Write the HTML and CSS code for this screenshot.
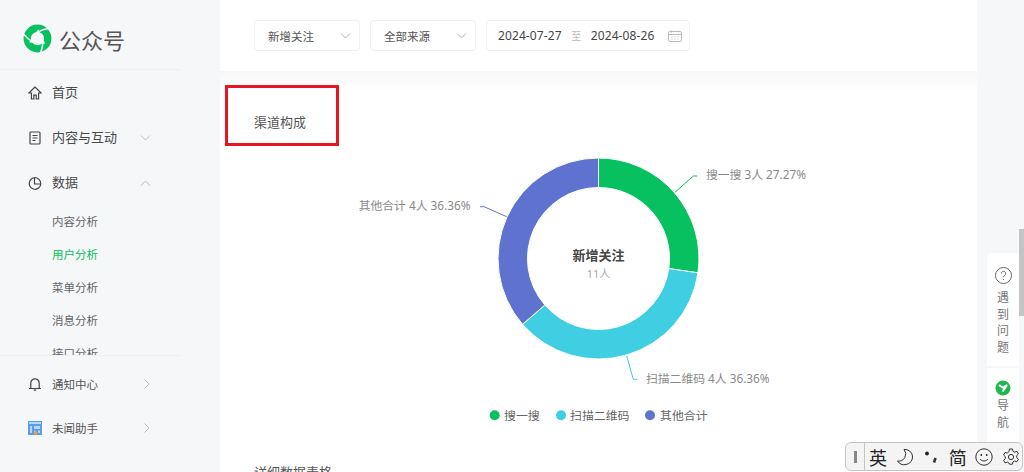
FILE: index.html
```html
<!DOCTYPE html>
<html lang="zh">
<head>
    <meta charset="UTF-8">
    <title>公众号 - 用户分析</title>
    <link rel="stylesheet" href="styles.css">
</head>
<body>
    <aside class="sidebar">
        <div class="brand">
            <svg class="brand-logo" viewBox="-15 -15 30 30">
                <circle r="10.600" fill="none" stroke="#07c160" stroke-width="7.600"/>
                <g id="cut">
                    <path d="M12.500-10.500C8-9.500 3-9 .5-6" fill="none" stroke="#f6f7f9" stroke-width="1.600"/>
                    <path d="M-2.500-5.500 1-9.500 2.500-5Z" fill="#f6f7f9"/>
                </g>
                <use href="#cut" transform="rotate(120)"/>
                <use href="#cut" transform="rotate(240)"/>
            </svg>
            <span>公众号</span>
        </div>
        <nav class="nav">
            <div class="nav-item">
                <svg class="nav-icon" viewBox="0 0 14 14"><path d="M7 1 .8 7h2.600v6h2.400V9.200h2.400V13h2.400V7h2.600Z"/></svg>
                <span>首页</span>
            </div>
            <div class="nav-item">
                <svg class="nav-icon" viewBox="0 0 14 14"><rect x="2" y="1" width="10" height="12" rx="1"/><path d="M4.500 4.500h5M4.500 7h5M4.500 9.500h3"/></svg>
                <span>内容与互动</span>
                <svg class="chevron" viewBox="0 0 10 6"><path d="M.5.5 5 5 9.500.5"/></svg>
            </div>
            <div class="nav-item">
                <svg class="nav-icon" viewBox="0 0 14 14"><path d="M6.500 1.700A5.800 5.800 0 1 0 12.800 8H6.500V1.500A6.300 6.300 0 0 1 12.800 8"/></svg>
                <span>数据</span>
                <svg class="chevron" viewBox="0 0 10 6"><path d="M.5 5.500 5 1 9.500 5.500"/></svg>
            </div>
            <div class="sub-item">内容分析</div>
            <div class="sub-item active">用户分析</div>
            <div class="sub-item">菜单分析</div>
            <div class="sub-item">消息分析</div>
            <div class="sub-item">接口分析</div>
        </nav>
        <div class="sidebar-foot">
            <div class="nav-item foot-item">
                <svg class="nav-icon" viewBox="0 0 14 14"><path d="M1 11.500h12M2.800 11.500V6a4.200 4.200 0 0 1 8.400 0v5.500M5.800 13.200h2.400"/></svg>
                <span>通知中心</span>
                <svg class="chevron-right" viewBox="0 0 6 10"><path d="M.5.5 5 5 .5 9.500"/></svg>
            </div>
            <div class="nav-item foot-item">
                <svg class="avatar" viewBox="0 0 14 14">
                    <rect width="14" height="14" fill="#5b9be8"/>
                    <path d="M1 1h12v2H1ZM2 5h2v7H2ZM6 5h6v3H6ZM6 9.500h1.500V12H6ZM10 9.500h2V12h-2Z" fill="#b9d6f4"/>
                    <circle cx="7.500" cy="12" r="1.800" fill="#f0a030"/>
                </svg>
                <span>未闻助手</span>
                <svg class="chevron-right" viewBox="0 0 6 10"><path d="M.5.5 5 5 .5 9.500"/></svg>
            </div>
        </div>
    </aside>

    <main class="main">
        <div class="filters">
            <div class="select">
                <span>新增关注</span>
                <svg class="select-arrow" viewBox="0 0 10 6"><path d="M.5.5 5 5 9.500.5"/></svg>
            </div>
            <div class="select">
                <span>全部来源</span>
                <svg class="select-arrow" viewBox="0 0 10 6"><path d="M.5.5 5 5 9.500.5"/></svg>
            </div>
            <div class="date-range">
                <span>2024-07-27</span>
                <span class="date-sep">至</span>
                <span>2024-08-26</span>
                <svg class="calendar" viewBox="0 0 14 12"><rect x=".5" y="1.500" width="13" height="10" rx="1.500"/><path d="M.5 4.500h13M3.500 .5v2M10.500 .5v2M3.500 7h1M6.500 7h1M9.500 7h1M3.500 9.200h1M6.500 9.200h1M9.500 9.200h1"/></svg>
            </div>
        </div>

        <section class="channels">
            <div class="mark-box"></div>
            <h2 class="section-title">渠道构成</h2>
            <svg class="chart" viewBox="220 145 757 300">
                <g stroke="#fff" stroke-width="1">
                    <path fill="#07c160" d="M598.500 158A100.500 100.500 0 0 1 697.980 272.800L668.780 268.600A71 71 0 0 0 598.500 187.500Z"/>
                    <path fill="#40cee3" d="M697.980 272.800A100.500 100.500 0 0 1 522.550 324.300L544.840 305A71 71 0 0 0 668.780 268.600Z"/>
                    <path fill="#5f72cf" d="M522.550 324.300A100.500 100.500 0 0 1 598.500 158V187.500A71 71 0 0 0 544.840 305Z"/>
                </g>
                <g fill="none" stroke-width="1">
                    <path stroke="#07c160" d="M675 192.300 693.300 176H697.300"/>
                    <path stroke="#40cee3" d="M626.700 356 633.300 379.300H637.300"/>
                    <path stroke="#5f72cf" d="M506.700 216.700 484 206.700H480"/>
                </g>
                <g class="slice-label">
                    <text x="706" y="179">搜一搜 3人 27.27%</text>
                    <text x="646" y="383">扫描二维码 4人 36.36%</text>
                    <text x="470.500" y="210" text-anchor="end">其他合计 4人 36.36%</text>
                </g>
                <text class="center-title" x="598.500" y="260" text-anchor="middle">新增关注</text>
                <text class="center-sub" x="598.500" y="278" text-anchor="middle">11人</text>
                <g class="legend">
                    <circle cx="494.700" cy="415.300" r="5" fill="#07c160"/>
                    <text x="504" y="420">搜一搜</text>
                    <circle cx="561" cy="415.300" r="5" fill="#40cee3"/>
                    <text x="570" y="420">扫描二维码</text>
                    <circle cx="650" cy="415.300" r="5" fill="#5f72cf"/>
                    <text x="660" y="420">其他合计</text>
                </g>
            </svg>
            <h2 class="section-title next-title">详细数据表格</h2>
        </section>
    </main>
    <div class="gutter"></div>

    <div class="help-panel">
        <div class="help-block">
            <svg class="help-icon" viewBox="0 0 17 17"><circle cx="8.500" cy="8.500" r="8"/><path d="M6.300 6.600a2.200 2.200 0 1 1 3.400 1.800c-.8.500-1.200 1-1.200 1.900M8.500 12v1"/></svg>
            <span>遇</span><span>到</span><span>问</span><span>题</span>
        </div>
        <div class="help-block">
            <svg class="guide-icon" viewBox="0 0 16 16"><circle cx="8" cy="8" r="7.500" fill="#1fb84f"/><path d="M4 5.200 8 7.600 12 5.200 7.500 11.500" fill="none" stroke="#fff" stroke-width="2"/></svg>
            <span>导</span><span>航</span>
        </div>
    </div>
    <div class="scroll-thumb"></div>

    <div class="ime-bar">
        <div class="ime-grip"><i></i></div>
        <div class="ime-items">
            <span>英</span>
            <svg viewBox="0 0 18 18"><path d="M8 1.500a7.500 7.500 0 0 1 2 15A8 8 0 0 1 1.500 13 7 7 0 0 0 8 1.500Z"/></svg>
            <svg viewBox="0 0 18 18"><circle cx="5" cy="5.500" r="1.900" class="solid"/><path d="M13.500 10 12 14.500" class="thick"/></svg>
            <span>简</span>
            <svg viewBox="0 0 18 18"><circle cx="9" cy="9" r="8.200"/><circle cx="6.300" cy="7" r=".9" class="solid"/><circle cx="11.700" cy="7" r=".9" class="solid"/><path d="M5 11c2 2.600 6 2.600 8 0"/></svg>
            <svg viewBox="0 0 18 18"><circle cx="9" cy="9" r="2.600"/><path d="M7.500 1h3l.5 2.300 1.700.9 2.200-.8 1.500 2.600-1.700 1.600v2l1.700 1.600-1.500 2.600-2.200-.8-1.700.9-.5 2.300h-3L7 15l-1.700-.9-2.200.8-1.500-2.600 1.700-1.600v-2L1.600 7l1.500-2.600 2.200.8L7 3.300Z"/></svg>
        </div>
    </div>
</body>
</html>
```

FILE: styles.css
```css
* {
    box-sizing: border-box;
}

html, body {
    height: 472px;
}

body {
    margin: 0;
    display: flex;
    overflow: hidden;
    position: relative;
    font-family: "Noto Sans", "Noto Sans CJK SC", sans-serif;
    color: #555;
    background-color: #f6f7f9;
}

/* sidebar */
.sidebar {
    flex: 0 0 220px;
    height: 472px;
    display: flex;
    flex-direction: column;
    background-color: #f6f7f9;
}

.brand {
    width: 180px;
    height: 70px;
    flex-shrink: 0;
    display: flex;
    align-items: center;
    gap: 7px;
    padding: 8px 0 0 23px;
    font-size: 22px;
    color: #555;
    border-bottom: 1px solid #eeeff1;
}

.brand-logo {
    width: 29px;
    height: 29px;
}

.nav {
    height: 285px;
    flex-shrink: 0;
    overflow: hidden;
}

.nav-item {
    height: 45px;
    width: 180px;
    display: flex;
    align-items: center;
    padding-left: 28px;
    font-size: 13px;
    color: #4a4a4a;
}

.nav-item span {
    margin-bottom: 3px;
}

.nav-icon {
    width: 14px;
    height: 14px;
    margin-right: 10px;
    fill: none;
    stroke: #444;
    stroke-width: 1.2;
}

.chevron,
.chevron-right {
    fill: none;
    stroke: #bbb;
    stroke-width: 1;
    margin-left: auto;
}

.chevron {
    width: 11px;
    height: 6px;
    margin-right: 29px;
}

.chevron-right {
    width: 6px;
    height: 10px;
    margin-right: 30px;
}

.sub-item {
    height: 33px;
    line-height: 33px;
    padding-left: 52px;
    font-size: 11.500px;
    color: #666;
}

.sub-item.active {
    color: #07c160;
}

.sidebar-foot {
    width: 180px;
    padding-top: 6px;
    border-top: 1px solid #eeeff1;
}

.foot-item {
    height: 44px;
    font-size: 11.500px;
    color: #555;
}

.foot-item span {
    margin-bottom: 1px;
}

.avatar {
    width: 14px;
    height: 14px;
    margin-right: 10px;
}

/* main column */
.main {
    flex: 0 0 757px;
    height: 472px;
    overflow: hidden;
    background-color: #fff;
}

.gutter {
    flex: 1;
}

.filters {
    height: 71px;
    display: flex;
    align-items: center;
    gap: 10px;
    padding-left: 34px;
}

.select,
.date-range {
    height: 31px;
    display: flex;
    align-items: center;
    border: 1px solid #efefef;
    border-radius: 4px;
    background-color: #fff;
}

.select {
    width: 106px;
    padding: 0 8px 0 13px;
    justify-content: space-between;
    font-size: 11.500px;
    color: #555;
}

.select-arrow {
    width: 11px;
    height: 6px;
    fill: none;
    stroke: #b0b0b0;
    stroke-width: 1;
}

.date-range {
    width: 204px;
    padding: 0 7px 0 11px;
    gap: 9.500px;
    font-size: 12px;
    letter-spacing: 0.1px;
    color: #444;
}

.date-sep {
    color: #bbb;
    font-size: 10px;
}

.calendar {
    width: 14px;
    height: 12px;
    margin-left: auto;
    fill: none;
    stroke: #bbb;
    stroke-width: 1;
}

.channels {
    position: relative;
    padding-top: 41px;
    background: linear-gradient(to bottom, #f7f7f7, #fff 20px);
}

.mark-box {
    position: absolute;
    left: 5px;
    top: 14px;
    width: 114px;
    height: 61px;
    border: 3px solid #e8141f;
}

.section-title {
    margin: 0;
    padding-left: 34px;
    font-size: 13px;
    font-weight: 400;
    line-height: 20px;
    color: #555;
}

.chart {
    display: block;
    width: 757px;
    height: 300px;
    margin-top: 13px;
}

.next-title {
    margin-top: 17px;
}

.slice-label text {
    font-size: 11.800px;
    fill: #8a8a8a;
}

.center-title {
    font-size: 13px;
    font-weight: 700;
    fill: #444;
}

.center-sub {
    font-size: 11px;
    fill: #aaa;
}

.legend text {
    font-size: 11.900px;
    fill: #666;
}

/* floating help panel */
.help-panel {
    position: absolute;
    left: 987px;
    top: 253px;
    width: 32px;
    height: 190px;
    display: flex;
    flex-direction: column;
    gap: 2px;
}

.help-block {
    display: flex;
    flex-direction: column;
    align-items: center;
    background-color: #fff;
    font-size: 12px;
    line-height: 16.500px;
    color: #777;
}

.help-block:first-child {
    height: 113px;
    padding-top: 14px;
    border-top-left-radius: 6px;
}

.help-block:last-child {
    flex: 1;
    padding-top: 12px;
}

.help-icon {
    width: 17px;
    height: 17px;
    margin-bottom: 6px;
    fill: none;
    stroke: #666;
    stroke-width: 1;
}

.guide-icon {
    width: 16px;
    height: 16px;
    margin-bottom: 2px;
}

.scroll-thumb {
    position: absolute;
    left: 1019px;
    top: 229px;
    width: 5px;
    height: 87px;
    background-color: #c4c4c4;
}

/* input method toolbar */
.ime-bar {
    position: absolute;
    left: 845px;
    top: 442px;
    width: 178px;
    height: 29px;
    display: flex;
    border: 1px solid #c4c4c4;
    border-radius: 6px;
    background-color: #f4f4f4;
}

.ime-grip {
    width: 19px;
    display: flex;
    align-items: center;
    justify-content: center;
    border-right: 1px solid #c4c4c4;
}

.ime-grip i {
    width: 3px;
    height: 12px;
    background-color: #888;
}

.ime-items {
    flex: 1;
    display: flex;
    align-items: center;
    justify-content: space-between;
    padding: 0 2px 0 4px;
    font-size: 18px;
    color: #222;
}

.ime-items svg {
    width: 18px;
    height: 18px;
    fill: none;
    stroke: #333;
    stroke-width: 1;
}

.ime-items .solid {
    fill: #222;
    stroke: none;
}

.ime-items .thick {
    stroke-width: 2.600;
}
```
